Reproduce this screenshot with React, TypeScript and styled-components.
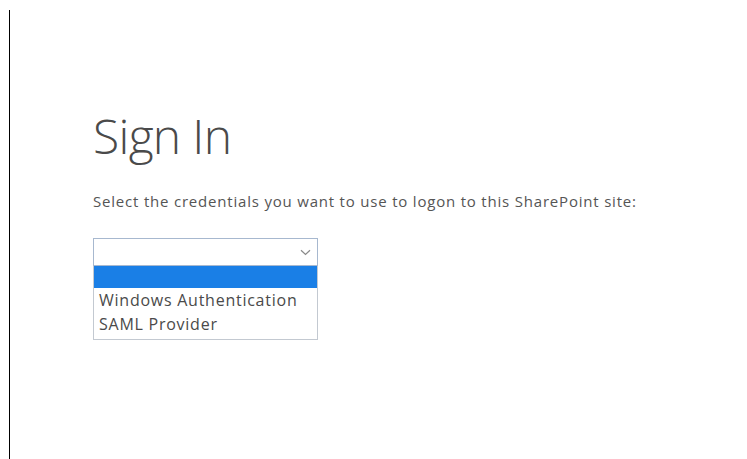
import React from "react";
import styled, { createGlobalStyle } from "styled-components";

const Global = createGlobalStyle`
  html, body {
    margin: 0;
    padding: 0;
    background: #ffffff;
  }
  body {
    font-family: "Open Sans", "Noto Sans", sans-serif;
    color: #444444;
  }
`;

const Frame = styled.div`
  margin: 10px 0 0 9px;
  border-left: 1px solid #000000;
  min-height: calc(100vh - 10px);
  box-sizing: border-box;
  padding: 94px 0 0 83px;
`;

const Title = styled.h1`
  margin: 0;
  font-family: "Open Sans", "Noto Sans", sans-serif;
  font-weight: 300;
  font-size: 48px;
  line-height: 64px;
  color: #4a4a4a;
  letter-spacing: -0.7px;
`;

const Prompt = styled.p`
  margin: 23px 0 0 0;
  font-size: 15px;
  line-height: 20px;
  letter-spacing: 0.8px;
  color: #555555;
  white-space: nowrap;
`;

const Picker = styled.div`
  margin-top: 27px;
  width: 225px;
  font-size: 16px;
  letter-spacing: 0.75px;
`;

const Field = styled.div`
  height: 28px;
  border: 1px solid #a7b8cf;
  box-sizing: border-box;
  display: flex;
  align-items: center;
  justify-content: flex-end;
  padding-right: 6px;
  background: #ffffff;
`;

const List = styled.div`
  border: 1px solid #c3c9d1;
  border-top: none;
  background: #ffffff;
  display: flex;
  flex-direction: column;
  padding-bottom: 3px;
`;

const Option = styled.div<{ $active?: boolean }>`
  height: ${(p) => (p.$active ? "22px" : "24px")};
  line-height: ${(p) => (p.$active ? "22px" : "24px")};
  padding-left: 5px;
  background: ${(p) => (p.$active ? "#1a7fe6" : "transparent")};
  color: #4a4a4a;
  white-space: nowrap;
`;

const Chevron = () => (
  <svg width="11" height="7" viewBox="0 0 11 7" fill="none">
    <path d="M1 1.2 L5.5 5.5 L10 1.2" stroke="#8a8a8a" strokeWidth="1.2" />
  </svg>
);

export default function App() {
  return (
    <>
      <Global />
      <Frame>
        <Title>Sign In</Title>
        <Prompt>Select the credentials you want to use to logon to this SharePoint site:</Prompt>
        <Picker>
          <Field>
            <Chevron />
          </Field>
          <List>
            <Option $active />
            <Option>Windows Authentication</Option>
            <Option>SAML Provider</Option>
          </List>
        </Picker>
      </Frame>
    </>
  );
}
